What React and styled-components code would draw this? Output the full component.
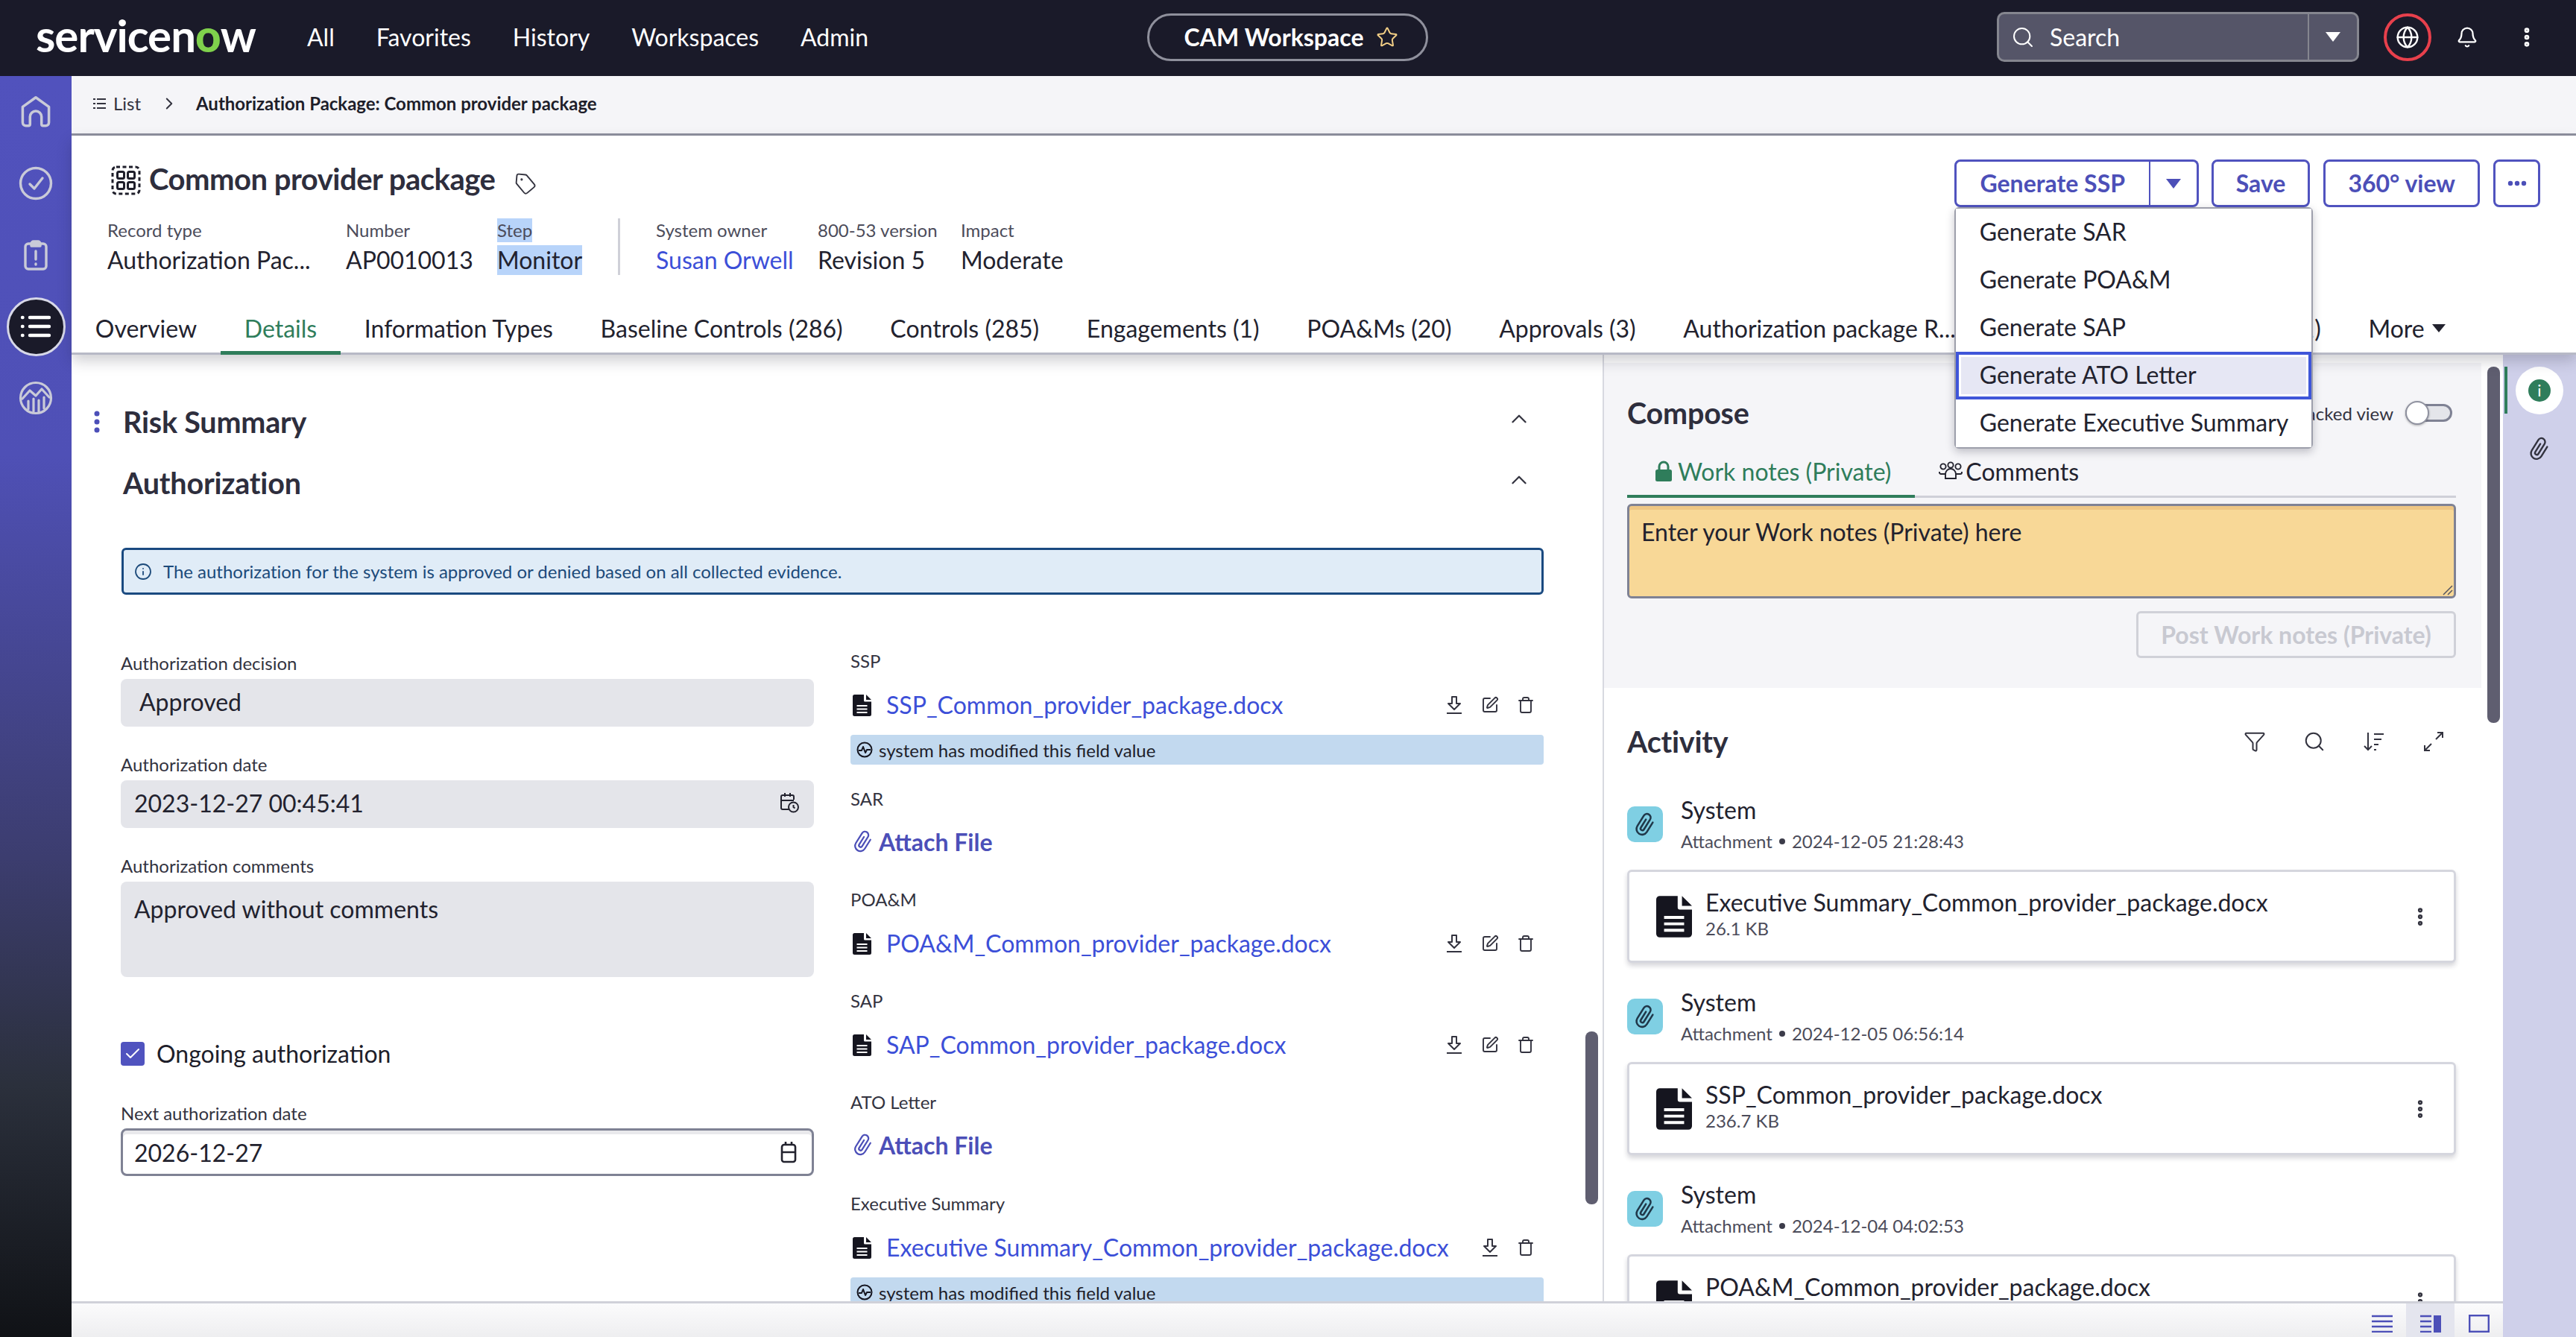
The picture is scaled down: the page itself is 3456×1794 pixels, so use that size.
import React from 'react';
import styled, { createGlobalStyle } from 'styled-components';
import { Search as SearchIcon, Bell, Globe, Star, Tag, ChevronUp, ChevronRight, SquarePen, Trash, Funnel, Check, Info, EllipsisVertical } from 'lucide-react';

const Global = createGlobalStyle`
  html, body { margin: 0; padding: 0; background: #fff; }
  body { font-family: Lato, "Noto Sans", sans-serif; color: #1e1e2a; }
  * { box-sizing: border-box; }
`;

const Page = styled.div`
  width: 3456px; height: 1794px; display: flex; flex-direction: column; overflow: hidden;
`;
const TopBar = styled.header`
  height: 102px; flex: none; background: #1a1a29; display: grid; grid-template-columns: 1fr auto 1fr; align-items: center; color: #fff; padding: 0 50px 3px 48px;
`;
const TopLeft = styled.div`display: flex; align-items: center; gap: 69px;`;
const Logo = styled.div`
  font-size: 60px; font-weight: 700; line-height: 60px; letter-spacing: -1px; color: #fff; margin-top: -6px; width: 295px; white-space: nowrap;
  span { color: #7fd14c; font-weight: 900; }
`;
const Nav = styled.nav`display: flex; gap: 56px; font-size: 32px; line-height: 40px;`;
const Pill = styled.div`
  height: 64px; width: 377px; border: 3px solid #8f909c; border-radius: 32px; display: flex; align-items: center; justify-content: center; gap: 16px; padding-left: 10px; font-size: 32px; font-weight: 700;
`;
const TopRight = styled.div`display: flex; align-items: center; justify-content: flex-end;`;
const SearchBox = styled.div`
  width: 486px; height: 67px; background: #555568; border: 3px solid #85868f; border-radius: 10px; display: flex; align-items: center; font-size: 32px; color: #fff;
`;
const SearchField = styled.div`flex: 1; display: flex; align-items: center; gap: 20px; padding-left: 16px; height: 100%; border-right: 2px solid #85868f;`;
const SearchCaret = styled.div`width: 64px; display: flex; align-items: center; justify-content: center;`;
const Caret = styled.span`
  display: inline-block; width: 0; height: 0; border-left: ${p => p.$s}px solid transparent; border-right: ${p => p.$s}px solid transparent; border-top: ${p => p.$s * 1.3}px solid ${p => p.$c};
`;
const GlobeRing = styled.div`
  width: 64px; height: 64px; margin-left: 33px; border: 4px solid #e8404c; border-radius: 50%; display: flex; align-items: center; justify-content: center;
`;
const BellSlot = styled.div`margin-left: 32px; width: 32px; display: flex; justify-content: center;`;
const KebabSlot = styled.div`margin-left: 48px; width: 32px; display: flex; justify-content: center;`;

const Body = styled.div`flex: 1; display: flex; min-height: 0;`;
const Rail = styled.aside`
  width: 96px; flex: none; background: linear-gradient(180deg, #5152bd 0%, #4f50b6 30%, #3c3d6f 62%, #2b303c 80%, #101216 100%);
  display: flex; flex-direction: column; align-items: center;
`;
const RailSlot = styled.div`height: 96px; display: flex; align-items: center; justify-content: center;`;
const RailActive = styled.div`
  width: 79px; height: 79px; border-radius: 50%; background: #1a1a29; border: 3px solid #d7d8e8; display: flex; align-items: center; justify-content: center;
`;
const Main = styled.main`flex: 1; display: flex; flex-direction: column; min-width: 0;`;
const Breadcrumb = styled.div`
  height: 80px; flex: none; background: #f5f5f8; border-bottom: 3px solid #8e909e; display: flex; align-items: center; padding: 0 0 3px 29px; font-size: 24px; line-height: 30px;
`;
const CrumbList = styled.span`display: flex; align-items: center; gap: 9px; color: #33333f; width: 89px;`;
const CrumbSep = styled.span`display: flex; width: 49px;`;
const CrumbCurrent = styled.span`font-weight: 700; color: #1e1e2a; letter-spacing: -0.02px;`;

const RecordHeader = styled.section`
  flex: none; height: 294px; background: #fff; position: relative; z-index: 3; box-shadow: 0 8px 18px rgba(30,30,50,.22);
`;
const HeaderTop = styled.div`display: flex; justify-content: space-between; padding: 32px 48px 0 53px; height: 111px;`;
const TitleRow = styled.div`display: flex; align-items: flex-start; height: 52px;`;
const Title = styled.h1`
  margin: 0 26px 0 11px; font-size: 40px; line-height: 52px; font-weight: 700; color: #2e2e3d; letter-spacing: -0.5px; white-space: nowrap;
`;
const IconBox = styled.span`display: flex; margin-top: ${p => p.$t || 0}px;`;
const Buttons = styled.div`display: flex; gap: 18px; position: relative;`;
const SplitGroup = styled.div`display: flex; position: relative; margin-right: -1px;`;
const Btn = styled.button`
  font: 700 32px/40px Lato, sans-serif; color: #4c4fb8; background: #fff; border: 3px solid #5053bf; border-radius: 8px; height: 64px; padding: 0 30px; white-space: nowrap; display: flex; align-items: center; justify-content: center;
`;
const BtnMain = styled(Btn)`border-radius: 8px 0 0 8px; border-right-width: 2px; width: 263px; padding: 0;`;
const BtnCaret = styled(Btn)`border-radius: 0 8px 8px 0; border-left: 0; width: 65px; padding: 0;`;
const BtnIcon = styled(Btn)`width: 63px; padding: 0;`;
const Menu = styled.div`
  position: absolute; left: 0; top: 64px; width: 481px; background: #fff; border: 2px solid #9d9fab; border-radius: 6px; box-shadow: 0 4px 12px rgba(20,20,40,.25); z-index: 10;
`;
const MenuItem = styled.div`
  height: 64px; display: flex; align-items: center; padding: 0 0 3px 32px; font-size: 32px; color: #22222e; white-space: nowrap;
  background: ${p => p.$active ? '#e6e7f4' : '#fff'};
  box-shadow: ${p => p.$active ? 'inset 0 0 0 4px #3f56d9, inset 0 0 0 7px #fff' : 'none'};
`;
const Meta = styled.div`display: flex; padding-left: 48px; height: 76px;`;
const MetaItem = styled.div`width: ${p => p.$w}px; flex: none;`;
const MetaLabel = styled.div`
  font-size: 24px; line-height: 32px; color: #4c4c5a; width: fit-content; margin-bottom: 4px; white-space: nowrap;
  background: ${p => p.$sel ? '#b8d4fa' : 'transparent'};
`;
const MetaValue = styled.div`
  font-size: 32px; line-height: 40px; color: ${p => p.$link ? '#3c4fd8' : '#22222e'}; width: fit-content; white-space: nowrap;
  background: ${p => p.$sel ? '#b8d4fa' : 'transparent'};
`;
const MetaRule = styled.div`width: 3px; height: 76px; background: #cfd0d8; margin-right: 48px; flex: none;`;
const Tabs = styled.div`
  position: absolute; left: 0; right: 0; bottom: 0; height: 66px; display: flex; border-bottom: 3px solid #b7b9c6; font-size: 32px;
`;
const Tab = styled.div`
  position: relative; padding: 0 31.85px 2px; display: flex; align-items: center; white-space: nowrap; gap: 10px; flex: none;
  justify-content: flex-end; width: ${p => p.$w ? p.$w + 'px' : 'auto'};
  color: ${p => p.$active ? '#2f7d5b' : '#22222e'};
  ${p => p.$active && `&::after { content: ''; position: absolute; left: 0; right: 0; bottom: -3px; height: 5px; background: #2f7d5b; }`}
`;

const Content = styled.div`flex: 1; display: flex; min-height: 0;`;
const ContentMain = styled.div`flex: 1; display: flex; flex-direction: column; min-width: 0;`;
const Panes = styled.div`flex: 1; display: flex; min-height: 0;`;
const LeftPane = styled.div`width: 2054px; flex: none; position: relative; overflow: hidden; background: #fff;`;
const SectionHead = styled.div`
  display: flex; align-items: center; height: 56px; margin-top: ${p => p.$mt}px; padding: 0 95px 0 ${p => p.$pl}px; gap: 29px;
  svg.chev { margin-top: -8px; }
`;
const SectionTitle = styled.h2`flex: 1; margin: 0; font-size: 39.5px; line-height: 50px; font-weight: 700; color: #2e2e3d; letter-spacing: -0.2px;`;
const Banner = styled.div`
  margin: 59px 79px 0 67px; height: 63px; border: 3px solid #1a4a80; border-radius: 6px; background: #e0ecf7; display: flex; align-items: center; gap: 15px; padding-left: 14px; font-size: 24px; letter-spacing: -0.02px; color: #1c4a7a;
`;
const FormGrid = styled.div`display: grid; grid-template-columns: 930px 930px; gap: 49px; margin: 74px 0 0 66px;`;
const FormCol = styled.div`display: flex; flex-direction: column; padding-top: ${p => p.$t || 0}px;`;
const Label = styled.div`font-size: 24px; line-height: 30px; color: #33333f; white-space: nowrap;`;
const Field = styled.div`
  margin: 6px 0 36px; height: ${p => p.$h || 64}px; background: #e4e5ea; border-radius: 8px; padding: ${p => p.$h ? 17 : 0}px 20px ${p => p.$h ? 0 : 2}px ${p => p.$pl || 18}px; font-size: 32px; line-height: 40px; color: #22222e;
  display: flex; justify-content: space-between; align-items: ${p => p.$h ? 'flex-start' : 'center'};
`;
const CheckRow = styled.div`display: flex; align-items: center; gap: 16px; font-size: 32px; line-height: 40px; margin: 47px 0 45px;`;
const CheckBoxMark = styled.span`width: 32px; height: 32px; border-radius: 4px; background: #5053bf; display: flex; align-items: center; justify-content: center;`;
const DateInput = styled.div`
  margin-top: 5px; height: 64px; background: #fff; border: 3px solid #7f8294; border-radius: 8px; box-shadow: inset 0 5px 0 #e9e9ec; padding: 0 20px 0 15px; font-size: 32px; display: flex; align-items: center; justify-content: space-between; color: #22222e;
`;
const FileBlock = styled.div`display: flex; flex-direction: column; margin-bottom: ${p => p.$mb}px;`;
const FileRow = styled.div`height: 48px; margin-top: 20px; display: flex; align-items: center; padding: 0 12px 0 3px; gap: 20px;`;
const FileLink = styled.a`flex: 1; font-size: 32px; line-height: 40px; color: #3c4fd8; white-space: nowrap;`;
const RowActions = styled.div`display: flex; gap: 24px; align-items: center;`;
const ModNote = styled.div`
  margin-top: 16px; height: 40px; background: #c2d9ef; border-radius: 4px; display: flex; align-items: center; gap: 8px; padding-left: 8px; font-size: 24px; color: #1e1e2a;
`;
const AttachBtn = styled.div`height: 48px; margin-top: 18px; display: flex; align-items: center; gap: 4px; font-size: 32px; font-weight: 700; color: #4c4fb8;`;
const ScrollThumb = styled.div`
  position: absolute; width: 17px; border-radius: 8px; background: #5f5e70; right: ${p => p.$r}px; top: ${p => p.$t}px; height: ${p => p.$h}px;
`;

const RightPane = styled.div`flex: 1; position: relative; overflow: hidden; background: #fff; border-left: 2px solid #d8d9e0; padding-top: 11px;`;
const Compose = styled.div`width: 1177px; background: #f5f5f8; padding: 42px 34px 40px 31px;`;
const PaneHead = styled.div`display: flex; align-items: center; justify-content: space-between; height: 50px;`;
const PaneTitle = styled.h2`margin: 0; font-size: 39.5px; line-height: 50px; font-weight: 700; color: #2e2e3d; letter-spacing: -0.2px;`;
const ToggleRow = styled.div`display: flex; align-items: center; gap: 16px; font-size: 24px; color: #33333f; padding-right: 5px;`;
const Switch = styled.span`position: relative; width: 63px; height: 24px; border: 3px solid #7f8294; border-radius: 12px; background: #e4e5ea; display: block;`;
const Knob = styled.span`position: absolute; left: -3px; top: -7px; width: 32px; height: 32px; border-radius: 50%; background: #fff; border: 2px solid #9092a0; box-shadow: 0 1px 3px rgba(0,0,0,.3);`;
const ComposeTabs = styled.div`display: flex; height: 56px; margin-top: 33px; border-bottom: 3px solid #cfd0d8; font-size: 32px;`;
const ComposeTab = styled.div`
  position: relative; display: flex; align-items: center; gap: ${p => p.$gap}px; padding: 0 ${p => p.$pr}px 13px ${p => p.$pl}px; color: ${p => p.$active ? '#2f7d5b' : '#22222e'}; white-space: nowrap;
  ${p => p.$active && `&::after { content: ''; position: absolute; left: 0; right: 0; bottom: -3px; height: 4px; background: #2f7d5b; }`}
`;
const NoteArea = styled.div`
  position: relative; margin-top: 8px; height: 127px; border: 3px solid #7f8294; border-radius: 6px; background: #f8d897; box-shadow: inset 0 5px 0 #eec684; padding: 15px 16px; font-size: 32px; line-height: 40px; color: #22222e;
`;
const Grip = styled.span`position: absolute; right: 1px; bottom: 1px; display: flex;`;
const PostRow = styled.div`display: flex; justify-content: flex-end; margin-top: 17px;`;
const PostBtn = styled.div`
  width: 429px; height: 63px; border: 3px solid #d0d1d8; border-radius: 6px; display: flex; align-items: center; justify-content: center; font-size: 32px; font-weight: 700; color: #c8c9d1;
`;
const Activity = styled.div`padding: 47px 63px 0 31px;`;
const ActivityTools = styled.div`display: flex; gap: 50px; padding-right: 15px; align-items: center;`;
const Entry = styled.div`margin-top: ${p => p.$first ? 47 : 33}px;`;
const EntryHead = styled.div`display: flex; align-items: center; gap: 24px;`;
const Avatar = styled.div`width: 48px; height: 48px; border-radius: 10px; background: #7fcfe3; display: flex; align-items: center; justify-content: center;`;
const EntryName = styled.div`font-size: 32px; line-height: 40px; color: #22222e;`;
const EntryMeta = styled.div`font-size: 24px; line-height: 30px; margin-top: 7px; color: #4c4c5a; display: flex; align-items: center; gap: 9px;`;
const Dot = styled.span`width: 8px; height: 8px; border-radius: 50%; background: #3c3c4a;`;
const Card = styled.div`
  margin-top: 23px; height: 125px; background: #fff; border: 3px solid #d5d6de; border-radius: 6px; box-shadow: 0 4px 6px rgba(30,30,50,.18); display: flex; align-items: center; padding: 0 30px 0 36px; gap: 18px;
`;
const CardText = styled.div`flex: 1; margin-top: -7px;`;
const CardName = styled.div`font-size: 32px; line-height: 40px; color: #22222e;`;
const CardSize = styled.div`font-size: 24px; line-height: 30px; color: #4c4c5a;`;
const SideRail = styled.aside`width: 98px; flex: none; background: #cfd0ea; position: relative; display: flex; flex-direction: column; align-items: center; padding-top: 16px; gap: 28px;`;
const SideMark = styled.span`position: absolute; left: 2px; top: 16px; width: 4px; height: 63px; background: #2f7d5b;`;
const SideBtn = styled.div`width: 64px; height: 64px; border-radius: 50%; background: #fff; display: flex; align-items: center; justify-content: center;`;
const InfoDot = styled.span`width: 30px; height: 30px; border-radius: 50%; background: #2f7d5b; color: #fff; font-size: 22px; line-height: 30px; text-align: center;`;
const StatusBar = styled.footer`
  flex: none; height: 48px; background: linear-gradient(180deg, #fbfbfc, #eeeef0); border-top: 3px solid #d0d1d9; display: flex; justify-content: flex-end; position: relative; z-index: 2;
`;
const ViewBtn = styled.div`width: 65px; display: flex; align-items: center; justify-content: center; padding-top: 8px; background: ${p => p.$active ? '#e4e5ee' : 'transparent'};`;

const HomeIco = () => (
  <svg width="44" height="44" viewBox="0 0 40 40" fill="none" stroke="#c9cad8" strokeWidth="3.2" strokeLinejoin="round">
    <path d="M4 14 L20 2.5 L36 14 V33 a4 4 0 0 1-4 4 h-3 a2 2 0 0 1-2-2 V26 a7 7 0 0 0-14 0 V35 a2 2 0 0 1-2 2 H8 a4 4 0 0 1-4-4 Z" />
  </svg>
);
const CheckIco = () => (
  <svg width="46" height="46" viewBox="0 0 46 46" fill="none" stroke="#c9cad8" strokeWidth="3.4" strokeLinecap="round" strokeLinejoin="round">
    <circle cx="23" cy="23" r="20.5" /><path d="M15 24 l6 6 l11-14" />
  </svg>
);
const ClipIco = () => (
  <svg width="32" height="42" viewBox="0 0 32 42" fill="none" stroke="#c9cad8" strokeWidth="3.4" strokeLinecap="round" strokeLinejoin="round">
    <rect x="2" y="6" width="28" height="34" rx="4" /><path d="M10 6 a3 3 0 0 1 3-3 h6 a3 3 0 0 1 3 3 v3 H10 Z" fill="#c9cad8" /><path d="M16 16 v11 M16 33 v1" />
  </svg>
);
const ListIco = () => (
  <svg width="42" height="34" viewBox="0 0 42 34" fill="none" stroke="#fff" strokeWidth="4.4" strokeLinecap="round">
    <path d="M13 5 H39 M13 17 H39 M13 29 H39 M3 5 h.5 M3 17 h.5 M3 29 h.5" />
  </svg>
);
const ChartIco = () => (
  <svg width="46" height="46" viewBox="0 0 46 46" fill="none" stroke="#c9cad8" strokeWidth="3.2" strokeLinecap="round" strokeLinejoin="round">
    <circle cx="23" cy="23" r="20.5" /><path d="M5 24 L15 13 L23 20 L31 11 L41 22" /><path d="M13 38 V27 M20 41 V24 M27 41 V26 M34 37 V22" />
  </svg>
);
const SmallList = () => (
  <svg width="18" height="16" viewBox="0 0 18 16" stroke="#33333f" strokeWidth="1.8" fill="none"><path d="M0 2h3M5 2h12M0 8h3M5 8h12M0 14h3M5 14h12" /></svg>
);
const RecordIco = () => (
  <svg width="40" height="40" viewBox="0 0 40 40" fill="none" stroke="#1e1e2a" strokeWidth="3">
    <rect x="2" y="2" width="36" height="36" rx="5" strokeDasharray="5 3.5" />
    <rect x="8.5" y="8.5" width="9" height="9" rx="2" /><rect x="22.5" y="8.5" width="9" height="9" rx="2" />
    <rect x="8.5" y="22.5" width="9" height="9" rx="2" /><rect x="22.5" y="22.5" width="9" height="9" rx="2" />
  </svg>
);
const DocIco = ({ w = 25, h = 29 }) => (
  <svg width={w} height={h} viewBox="0 0 25 29">
    <path d="M2.5 0 H15 V8 a1.5 1.5 0 0 0 1.5 1.5 H25 V26.5 a2.5 2.5 0 0 1-2.5 2.5 H2.5 A2.5 2.5 0 0 1 0 26.5 V2.5 A2.5 2.5 0 0 1 2.5 0 Z M18 0 L25 7 H18 Z" fill="#15151f" />
    <path d="M5.5 15 h14 M5.5 19.5 h14 M5.5 24 h14" stroke="#fff" strokeWidth="2" />
  </svg>
);
const DownloadIco = () => (
  <svg width="24" height="26" viewBox="0 0 24 26" fill="none" stroke="#33333f" strokeWidth="2" strokeLinejoin="round">
    <path d="M9 2h6v9h5l-8 8-8-8h5z" /><path d="M2 24h20" />
  </svg>
);
const PulseIco = () => (
  <svg width="22" height="22" viewBox="0 0 22 22" fill="none" stroke="#15151f" strokeWidth="2" strokeLinejoin="round">
    <circle cx="11" cy="11" r="9.5" /><path d="M3 12h4l2-5 3 8 2-4h5" />
  </svg>
);
const ClipFile = ({ s = 34, c = '#4c4fb8', w = 1.6 }) => (
  <svg width={s} height={s} viewBox="0 0 24 24" fill="none" stroke={c} strokeWidth={w} strokeLinecap="round" strokeLinejoin="round" style={{ transform: 'rotate(32deg)' }}>
    <path d="M17 7 V17 a5 5 0 0 1-10 0 V6 a3.3 3.3 0 0 1 6.6 0 V16.5 a1.6 1.6 0 0 1-3.2 0 V8" />
  </svg>
);
const DateTimeIco = () => (
  <svg width="26" height="30" viewBox="0 0 26 30" fill="none" stroke="#22222e" strokeWidth="2">
    <path d="M12 23 H4 a2 2 0 0 1-2-2 V6 a2 2 0 0 1 2-2 h13 a2 2 0 0 1 2 2 v4 M2 11h17 M7 1v5 M14 1v5" /><circle cx="18.5" cy="20" r="6.5" /><path d="M18.5 17v3l2 1.5" />
  </svg>
);
const CalIco = () => (
  <svg width="22" height="30" viewBox="0 0 22 30" fill="none" stroke="#22222e" strokeWidth="2.6">
    <rect x="2" y="5" width="18" height="23" rx="3" /><path d="M2 15h18M7 1v5M15 1v5" />
  </svg>
);
const LockIco = () => (
  <svg width="26" height="30" viewBox="0 0 26 30" fill="none">
    <path d="M7 14 V9 a6 6 0 0 1 12 0 V14" stroke="#2f7d5b" strokeWidth="3" />
    <rect x="2" y="13" width="22" height="16" rx="2.5" fill="#2f7d5b" />
  </svg>
);
const PeopleIco = () => (
  <svg width="32" height="26" viewBox="0 0 32 26" fill="none" stroke="#22222e" strokeWidth="1.9">
    <circle cx="6" cy="7" r="3.6" /><circle cx="16" cy="5" r="3.6" /><circle cx="26" cy="7" r="3.6" />
    <path d="M9 23 v-6 a7 7 0 0 1 14 0 v6 z" /><path d="M9 17 H3 a2 2 0 0 1-2-2 v-1 M23 17 h6 a2 2 0 0 0 2-2 v-1" />
  </svg>
);
const SortIco = () => (
  <svg width="30" height="30" viewBox="0 0 30 30" fill="none" stroke="#33333f" strokeWidth="2"><path d="M7 3 V26 M2 21 l5 5 l5-5 M15 5 H28 M15 12 H25 M15 19 H21 M15 26 H18" /></svg>
);
const ExpandIco = () => (
  <svg width="30" height="30" viewBox="0 0 30 30" fill="none" stroke="#33333f" strokeWidth="2"><path d="M18 12 L27 3 M20 3 H27 V10 M12 18 L3 27 M3 20 V27 H10" /></svg>
);
const GripIco = () => (
  <svg width="16" height="16" viewBox="0 0 16 16" stroke="#55555f" strokeWidth="1.5"><path d="M15 3 L3 15 M15 9 L9 15" /></svg>
);
const DotsIco = () => (
  <svg width="26" height="8" viewBox="0 0 26 8" fill="#4c4fb8"><circle cx="4" cy="4" r="3.2" /><circle cx="13" cy="4" r="3.2" /><circle cx="22" cy="4" r="3.2" /></svg>
);
const ViewLines = () => (
  <svg width="28" height="24" viewBox="0 0 28 24" stroke="#4c4fb8" strokeWidth="2.4"><path d="M0 2h28M0 9h28M0 16h28M0 23h28" /></svg>
);
const ViewSplit = () => (
  <svg width="28" height="24" viewBox="0 0 28 24"><path d="M0 2h15M0 9h15M0 16h15M0 23h15" stroke="#4c4fb8" strokeWidth="2.4" /><rect x="18" y="1" width="10" height="23" fill="#4c4fb8" /></svg>
);
const ViewFull = () => (
  <svg width="28" height="24" viewBox="0 0 28 24" fill="none" stroke="#4c4fb8" strokeWidth="2.4"><rect x="1.2" y="1.2" width="25.6" height="21.6" /></svg>
);

const tabsList = ['Overview', 'Details', 'Information Types', 'Baseline Controls (286)', 'Controls (285)', 'Engagements (1)', 'POA&Ms (20)', 'Approvals (3)', 'Authorization package R...'];

const activity = [
  { time: '2024-12-05 21:28:43', name: 'Executive Summary_Common_provider_package.docx', size: '26.1 KB' },
  { time: '2024-12-05 06:56:14', name: 'SSP_Common_provider_package.docx', size: '236.7 KB' },
  { time: '2024-12-04 04:02:53', name: 'POA&M_Common_provider_package.docx', size: '33.2 KB' },
];

const FileLine = ({ name, edit = true }) => (
  <FileRow>
    <DocIco />
    <FileLink>{name}</FileLink>
    <RowActions>
      <DownloadIco />
      {edit && <SquarePen size={24} strokeWidth={1.9} color="#33333f" />}
      <Trash size={24} strokeWidth={1.9} color="#33333f" />
    </RowActions>
  </FileRow>
);
const Note = () => <ModNote><PulseIco />system has modified this field value</ModNote>;

export default function App() {
  return (
    <Page>
      <Global />
      <TopBar>
        <TopLeft>
          <Logo>servicen<span>o</span>w</Logo>
          <Nav><span>All</span><span>Favorites</span><span>History</span><span>Workspaces</span><span>Admin</span></Nav>
        </TopLeft>
        <Pill>CAM Workspace <Star size={30} strokeWidth={1.6} color="#f3cf86" /></Pill>
        <TopRight>
          <SearchBox>
            <SearchField><SearchIcon size={32} strokeWidth={1.5} color="#fff" />Search</SearchField>
            <SearchCaret><Caret $s={10} $c="#fff" /></SearchCaret>
          </SearchBox>
          <GlobeRing><Globe size={32} strokeWidth={1.8} color="#fff" /></GlobeRing>
          <BellSlot><Bell size={30} strokeWidth={1.8} color="#fff" /></BellSlot>
          <KebabSlot><EllipsisVertical size={34} strokeWidth={3} color="#fff" /></KebabSlot>
        </TopRight>
      </TopBar>
      <Body>
        <Rail>
          <RailSlot><HomeIco /></RailSlot>
          <RailSlot><CheckIco /></RailSlot>
          <RailSlot><ClipIco /></RailSlot>
          <RailSlot><RailActive><ListIco /></RailActive></RailSlot>
          <RailSlot><ChartIco /></RailSlot>
        </Rail>
        <Main>
          <Breadcrumb>
            <CrumbList><SmallList />List</CrumbList>
            <CrumbSep><ChevronRight size={26} strokeWidth={1.8} color="#33333f" /></CrumbSep>
            <CrumbCurrent>Authorization Package: Common provider package</CrumbCurrent>
          </Breadcrumb>
          <RecordHeader>
            <HeaderTop>
              <TitleRow>
                <IconBox $t={8}><RecordIco /></IconBox>
                <Title>Common provider package</Title>
                <IconBox $t={18}><Tag size={30} strokeWidth={1.5} color="#33333f" style={{ transform: 'rotate(5deg)' }} /></IconBox>
              </TitleRow>
              <Buttons>
                <SplitGroup>
                  <BtnMain>Generate SSP</BtnMain>
                  <BtnCaret><Caret $s={10} $c="#4c4fb8" /></BtnCaret>
                  <Menu>
                    <MenuItem>Generate SAR</MenuItem>
                    <MenuItem>Generate POA&amp;M</MenuItem>
                    <MenuItem>Generate SAP</MenuItem>
                    <MenuItem $active>Generate ATO Letter</MenuItem>
                    <MenuItem>Generate Executive Summary</MenuItem>
                  </Menu>
                </SplitGroup>
                <Btn>Save</Btn>
                <Btn>360° view</Btn>
                <BtnIcon><DotsIco /></BtnIcon>
              </Buttons>
            </HeaderTop>
            <Meta>
              <MetaItem $w={320}><MetaLabel>Record type</MetaLabel><MetaValue>Authorization Pac...</MetaValue></MetaItem>
              <MetaItem $w={203}><MetaLabel>Number</MetaLabel><MetaValue>AP0010013</MetaValue></MetaItem>
              <MetaItem $w={162}><MetaLabel $sel>Step</MetaLabel><MetaValue $sel>Monitor</MetaValue></MetaItem>
              <MetaRule />
              <MetaItem $w={217}><MetaLabel>System owner</MetaLabel><MetaValue $link>Susan Orwell</MetaValue></MetaItem>
              <MetaItem $w={192}><MetaLabel>800-53 version</MetaLabel><MetaValue>Revision 5</MetaValue></MetaItem>
              <MetaItem $w={200}><MetaLabel>Impact</MetaLabel><MetaValue>Moderate</MetaValue></MetaItem>
            </Meta>
            <Tabs>
              {tabsList.map(t => <Tab key={t} $active={t === 'Details'}>{t}</Tab>)}
              <Tab $w={490}>Security Documents (1)</Tab>
              <Tab>More <Caret $s={9} $c="#22222e" /></Tab>
            </Tabs>
          </RecordHeader>
          <Content>
            <ContentMain>
              <Panes>
                <LeftPane>
                  <SectionHead $mt={62} $pl={28}>
                    <svg width="12" height="32" viewBox="0 0 12 32" fill="#4c4fb8"><circle cx="6" cy="5" r="3.5" /><circle cx="6" cy="16" r="3.5" /><circle cx="6" cy="27" r="3.5" /></svg>
                    <SectionTitle>Risk Summary</SectionTitle>
                    <ChevronUp className="chev" size={34} strokeWidth={1.6} color="#33333f" />
                  </SectionHead>
                  <SectionHead $mt={26} $pl={69}>
                    <SectionTitle>Authorization</SectionTitle>
                    <ChevronUp className="chev" size={34} strokeWidth={1.6} color="#33333f" />
                  </SectionHead>
                  <Banner><Info size={24} strokeWidth={1.8} color="#1c4a7a" />The authorization for the system is approved or denied based on all collected evidence.</Banner>
                  <FormGrid>
                    <FormCol $t={3}>
                      <Label>Authorization decision</Label>
                      <Field $pl={25}>Approved</Field>
                      <Label>Authorization date</Label>
                      <Field>2023-12-27 00:45:41<DateTimeIco /></Field>
                      <Label>Authorization comments</Label>
                      <Field $h={128}>Approved without comments</Field>
                      <CheckRow>
                        <CheckBoxMark><Check size={24} strokeWidth={2} color="#fff" /></CheckBoxMark>
                        Ongoing authorization
                      </CheckRow>
                      <Label>Next authorization date</Label>
                      <DateInput>2026-12-27<CalIco /></DateInput>
                    </FormCol>
                    <FormCol>
                      <FileBlock $mb={31}><Label>SSP</Label><FileLine name="SSP_Common_provider_package.docx" /><Note /></FileBlock>
                      <FileBlock $mb={39}><Label>SAR</Label><AttachBtn><ClipFile />Attach File</AttachBtn></FileBlock>
                      <FileBlock $mb={38}><Label>POA&amp;M</Label><FileLine name="POA&M_Common_provider_package.docx" /></FileBlock>
                      <FileBlock $mb={38}><Label>SAP</Label><FileLine name="SAP_Common_provider_package.docx" /></FileBlock>
                      <FileBlock $mb={40}><Label>ATO Letter</Label><AttachBtn><ClipFile />Attach File</AttachBtn></FileBlock>
                      <FileBlock $mb={0}><Label>Executive Summary</Label><FileLine name="Executive Summary_Common_provider_package.docx" edit={false} /><Note /></FileBlock>
                    </FormCol>
                  </FormGrid>
                  <ScrollThumb $r={6} $t={908} $h={232} />
                </LeftPane>
                <RightPane>
                  <Compose>
                    <PaneHead>
                      <PaneTitle>Compose</PaneTitle>
                      <ToggleRow>Stacked view<Switch><Knob /></Switch></ToggleRow>
                    </PaneHead>
                    <ComposeTabs>
                      <ComposeTab $active $gap={6} $pl={36} $pr={32}><LockIco />Work notes (Private)</ComposeTab>
                      <ComposeTab $gap={4} $pl={32} $pr={0}><PeopleIco />Comments</ComposeTab>
                    </ComposeTabs>
                    <NoteArea>Enter your Work notes (Private) here<Grip><GripIco /></Grip></NoteArea>
                    <PostRow><PostBtn>Post Work notes (Private)</PostBtn></PostRow>
                  </Compose>
                  <Activity>
                    <PaneHead>
                      <PaneTitle>Activity</PaneTitle>
                      <ActivityTools>
                        <Funnel size={30} strokeWidth={1.6} color="#33333f" />
                        <SearchIcon size={30} strokeWidth={1.6} color="#33333f" />
                        <SortIco />
                        <ExpandIco />
                      </ActivityTools>
                    </PaneHead>
                    {activity.map((a, i) => (
                      <Entry key={a.time} $first={i === 0}>
                        <EntryHead>
                          <Avatar><ClipFile s={36} c="#20384a" w={1.7} /></Avatar>
                          <div>
                            <EntryName>System</EntryName>
                            <EntryMeta>Attachment<Dot />{a.time}</EntryMeta>
                          </div>
                        </EntryHead>
                        <Card>
                          <DocIco w={48} h={56} />
                          <CardText><CardName>{a.name}</CardName><CardSize>{a.size}</CardSize></CardText>
                          <EllipsisVertical size={30} strokeWidth={3} color="#33333f" />
                        </Card>
                      </Entry>
                    ))}
                  </Activity>
                  <ScrollThumb $r={4} $t={16} $h={478} />
                </RightPane>
              </Panes>
              <StatusBar>
                <ViewBtn><ViewLines /></ViewBtn>
                <ViewBtn $active><ViewSplit /></ViewBtn>
                <ViewBtn><ViewFull /></ViewBtn>
              </StatusBar>
            </ContentMain>
            <SideRail>
              <SideMark />
              <SideBtn><InfoDot>i</InfoDot></SideBtn>
              <ClipFile s={36} c="#33333f" w={1.6} />
            </SideRail>
          </Content>
        </Main>
      </Body>
    </Page>
  );
}
